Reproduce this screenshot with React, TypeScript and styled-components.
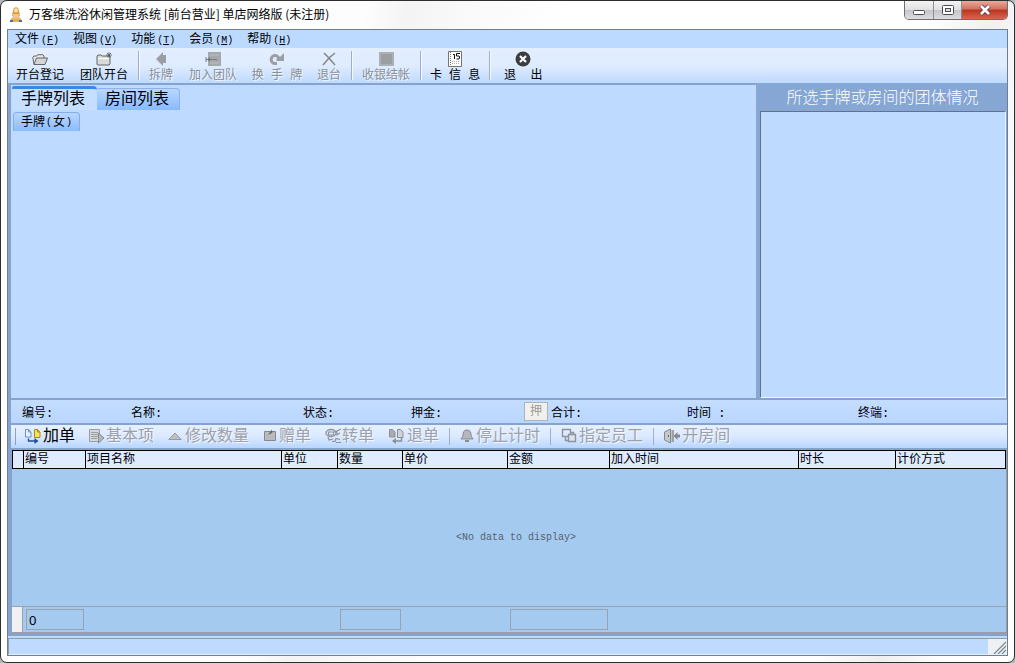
import React from "react";
import styled, { createGlobalStyle, css } from "styled-components";

const song = '"Liberation Mono", "Noto Sans CJK SC", monospace';
const ui = '"Noto Sans CJK SC", "Noto Sans", sans-serif';

const GlobalStyle = createGlobalStyle`
  * { box-sizing: border-box; }
  body { margin: 0; background: #b4b6b8; font: 12px/16px ${song}; color: #000; }
  button { font: inherit; color: inherit; border: 0; padding: 0; margin: 0; background: none; white-space: pre; }
  svg { flex-shrink: 0; }
`;

const Window = styled.div`
  min-height: 100vh;
  display: flex;
  flex-direction: column;
  padding: 0 6px 6px;
  border: 1px solid #2e2e30;
  border-radius: 7px;
  background: linear-gradient(100deg, #fff 0, #fdfdfd 360px, #f4f4f4 400px, #fafafa 470px, #fff 560px, #fff 82%, #f0f0f0 88%, #fff 94%);
`;

const TitleBar = styled.header`
  display: flex;
  align-items: flex-start;
  height: 28px;
  font-family: ${ui};
`;

const Title = styled.h1`
  flex: 1;
  margin: 0;
  padding: 5px 0 0 5px;
  font-size: 12px;
  line-height: 16px;
  font-weight: 400;
  white-space: nowrap;
`;

const AppIcon = styled.svg`
  margin: 5px 0 0 1px;
`;

const CaptionButtons = styled.div`
  display: flex;
  height: 19px;
  border: 1px solid #6d6d72;
  border-top: 0;
  border-radius: 0 0 5px 5px;
  overflow: hidden;
`;

const CaptionButton = styled.button<{ $close?: boolean }>`
  display: flex;
  align-items: center;
  justify-content: center;
  width: ${(p) => (p.$close ? 46 : 28)}px;
  border-left: ${(p) => (p.$close ? "1px solid #7c3a34" : 0)};
  background: ${(p) =>
    p.$close
      ? "linear-gradient(#e9a99c 0, #d4705f 45%, #bd3420 50%, #d6664e 100%)"
      : "linear-gradient(#f4f4f4 0, #e0e0e2 48%, #c6c6ca 52%, #dcdce0 100%)"};
  & + & { border-left: 1px solid #8d8d92; }
`;

const Client = styled.div`
  flex: 1;
  display: flex;
  flex-direction: column;
  border: 1px solid #6e7f90;
  background: #bedaff;
`;

const MenuBar = styled.nav`
  display: flex;
  gap: 14px;
  height: 18px;
  padding-left: 7px;
  background: #bcd9ff;
`;

const MenuButton = styled.button`
  display: flex;
  align-items: center;
  gap: 2px;
  padding-top: 3px;
  line-height: 15px;
`;

const Latin = styled.span`
  font-size: 10px;
`;

const MainToolbar = styled.div`
  display: flex;
  height: 35px;
  background: linear-gradient(#e3eeff 0, #dfecff 50%, #bedaff 100%);
`;

const ToolButton = styled.button<{ $pad?: number }>`
  display: flex;
  flex-direction: column;
  align-items: center;
  padding: 3px ${(p) => p.$pad ?? 8}px 0;
  line-height: 18px;
  &:disabled {
    color: #8b9097;
    text-shadow: 1px 1px 0 #f2f7ff;
  }
`;

const SpacedButton = styled(ToolButton)`
  width: 64px;
  padding-left: 0;
  padding-right: 0;
`;

const ToolSeparator = styled.span`
  width: 1px;
  margin: 3px 2px;
  background: #a3afc0;
  box-shadow: 1px 0 0 #f5f9ff;
`;

const Workspace = styled.div`
  flex: 1;
  display: flex;
  border-left: 3px solid #86a3cf;
`;

const ListPane = styled.section`
  flex: 1;
  border-top: 2px solid #86a3cf;
  background: #bedaff;
`;

const TabRow = styled.div`
  display: flex;
  align-items: flex-end;
  height: 25px;
  padding-left: 1px;
`;

const Tab = styled.button<{ $active?: boolean }>`
  height: ${(p) => (p.$active ? 24 : 22)}px;
  padding: 0 ${(p) => (p.$active ? 12 : 10)}px 0 ${(p) => (p.$active ? 9 : 8)}px;
  font-size: 16px;
  line-height: 20px;
  border-radius: 2px 4px 0 0;
  ${(p) =>
    p.$active
      ? css`
          border-top: 3px solid #3889e6;
          background: #c6deff;
        `
      : css`
          border: 1px solid #8db2e6;
          border-left: 0;
          border-bottom: 0;
          background: linear-gradient(#b9d7ff, #86baff);
        `}
`;

const SubTab = styled.button`
  display: flex;
  align-items: center;
  gap: 1px;
  height: 19px;
  margin: 2px 0 0 2px;
  padding: 2px 7px 0;
  border: 1px solid #86aee4;
  border-bottom: 0;
  border-radius: 4px 4px 0 0;
  background: linear-gradient(#b9d7ff, #8abcff);
`;

const GroupPane = styled.section`
  display: flex;
  flex-direction: column;
  width: 251px;
  padding-left: 4px;
  background: #86a6d4;
`;

const GroupTitle = styled.h2`
  height: 28px;
  margin: 0;
  padding: 2px 2px 0 0;
  font-size: 16px;
  line-height: 28px;
  font-weight: 300;
  text-align: center;
  color: #fff;
`;

const GroupBox = styled.div`
  flex: 1;
  margin-right: 1px;
  border: 1px solid #eef4fc;
  border-top-color: #66727c;
  border-left-color: #66727c;
  background: #bedaff;
`;

const InfoStrip = styled.div`
  display: grid;
  grid-template-columns: 109px 172px 108px 113px 27px 136px 171px 1fr;
  align-items: center;
  height: 27px;
  padding-left: 11px;
  border: solid #86a3cf;
  border-width: 2px 0 2px 3px;
  background: linear-gradient(#c4ddff, #b9d6fe);
`;

const InfoLabel = styled.span`
  padding-top: 4px;
`;

const DepositButton = styled.button`
  width: 24px;
  height: 19px;
  padding-top: 2px;
  border: 1px solid #a9b4bd;
  background: #f1f0ec;
  line-height: 15px;
  &:disabled { color: #9a9a9a; }
`;

const OrderToolbar = styled.div`
  display: flex;
  align-items: stretch;
  height: 23px;
  padding-left: 4px;
  border-left: 3px solid #86a3cf;
  background: linear-gradient(#e6f0ff 0, #dbe9ff 50%, #b8d6ff 100%);
`;

const Grip = styled.span`
  width: 1px;
  margin: 3px 1px 3px 0;
  background: #8f9fb6;
`;

const OrderButton = styled.button`
  display: flex;
  align-items: flex-start;
  gap: 1px;
  padding: 2px 7px 0;
  font-size: 16px;
  line-height: 20px;
  & svg { margin-top: 1px; }
  &:disabled {
    color: #9da2aa;
    text-shadow: 1px 1px 0 #f2f7ff;
  }
`;

const OrderSeparator = styled.span`
  width: 1px;
  margin: 3px;
  background: #a3afc0;
`;

const GridFrame = styled.div`
  padding-left: 1px;
  border: solid #86a3cf;
  border-width: 2px 0 2px 3px;
  background: #86a3cf;
`;

const Grid = styled.table`
  width: 100%;
  table-layout: fixed;
  border-spacing: 0;
  border-right: 1px solid #989da6;
  border-bottom: 2px solid #989da6;
  background: #a5caf0;
`;

const HeadCell = styled.th`
  height: 18px;
  padding: 2px 0 0 1px;
  border: solid #000;
  border-width: 1px 0 1px 1px;
  background: #dfebff;
  font-weight: 400;
  line-height: 15px;
  text-align: left;
  white-space: nowrap;
  &:last-child { border-right-width: 1px; }
`;

const EmptyCell = styled.td`
  height: 137px;
  padding: 0 0 0 14px;
  text-align: center;
  font-size: 10px;
  color: #56616e;
`;

const FootCell = styled.td<{ $marker?: boolean }>`
  height: 26px;
  padding: 2px 1px 2px 3px;
  border-top: 1px solid #98a2b0;
  ${(p) =>
    p.$marker &&
    css`
      background: #f0f0f0;
      border-right: 1px solid #98a2b0;
    `}
`;

const Sum = styled.output`
  display: block;
  height: 21px;
  padding-left: 2px;
  border: 1px solid #98a2b0;
  font: 13px/21px "Noto Sans", sans-serif;
`;

const StatusBar = styled.footer`
  display: flex;
  justify-content: flex-end;
  height: 17px;
  margin-top: 2px;
  border: solid #8b9db3;
  border-width: 1px 0 0 1px;
  border-bottom: 1px solid #e6f0fc;
  background: #bedaff;
`;

const SizeGrip = styled.svg`
  background: #eef1f4;
`;

type IconProps = { w?: number; h?: number; children: React.ReactNode };
const Icon = ({ w = 16, h = 16, children }: IconProps) => (
  <svg width={w} height={h} viewBox={`0 0 ${w} ${h}`} fill="none" aria-hidden="true">
    {children}
  </svg>
);

const Folder = ({ star }: { star?: boolean }) => (
  <Icon>
    {star ? (
      <>
        <path d="M1 13.500V5l1-1h3l1 1h8v8l-1 1H2z" fill="#d9dbd8" stroke="#62666a" />
        <path d="M2 7.500h11" stroke="#fff" />
        <path d="M10 4h6M13 1v6M11 2l4 4M15 2l-4 4" stroke="#55595e" strokeWidth=".8" />
      </>
    ) : (
      <>
        <path d="M2 13.500 .8 6.500l1-1.500h3l1 -1.300h5l1.200 1.300v2" fill="#e8e9e4" stroke="#62666a" />
        <path d="M2 13.500 4.500 7h11l-2.500 6.500z" fill="#d3d6d2" stroke="#62666a" />
      </>
    )}
  </Icon>
);

const grey = "#9b9fa4";

const ArrowLeft = () => (
  <Icon><path d="M3 8 10 1v3h3v8h-3v3z" fill={grey} /></Icon>
);
const JoinTeam = () => (
  <Icon>
    <path d="M3 1h13v14H3z" fill="#a6a9ac" />
    <path d="M5 4h9M5 12h9" stroke="#bcbfc2" />
    <path d="M1 6v5M1 8.500h11" stroke="#74787c" />
    <path d="m5 6-3 2.500L5 11z" fill="#74787c" />
  </Icon>
);
const Rotate = () => (
  <Icon>
    <path d="M8 12.500H6a4 4 0 1 1 4-5" stroke={grey} strokeWidth="3" />
    <path d="M7.500 10V7.500L11 6l4-4v8z" fill={grey} />
  </Icon>
);
const Cross = () => (
  <Icon>
    <path d="m3 2 4 4 7 8M14 2 8 7l-6 7" stroke="#85898e" strokeWidth="1.600" />
  </Icon>
);
const Cash = () => (
  <Icon>
    <path d="M1 1h15v14H1z" fill="#adb0b3" />
    <path d="M3 3h11v10H3z" fill="#9b9ea2" />
  </Icon>
);
const Calendar = () => (
  <Icon>
    <path d="M1.500.5h13v15h-13z" fill="#fff" stroke="#77726c" />
    <path d="M3.500 1v14" stroke="#77726c" strokeDasharray="1 1" />
    <path d="M5 10.500h8M5 12.500h8" stroke="#aaa" strokeDasharray="1 1" />
    <path d="M6 3.500h1.500V8M13 2.500H9.500V5H12l.7 1-.7 2H9.500" stroke="#111" />
  </Icon>
);
const Exit = () => (
  <Icon>
    <circle cx="8" cy="8" r="7.500" fill="#3b3e42" />
    <path d="m5 5 6 6M11 5l-6 6" stroke="#fff" strokeWidth="2.200" />
  </Icon>
);

const AddOrder = () => (
  <Icon w={18}>
    <path d="M1.500 1.500h3l2.500 2.500v5H1.500z" fill="#e8f2ff" stroke="#6e8fc0" />
    <path d="M4.500 1.500V4H7" stroke="#6e8fc0" />
    <path d="M10.500 1.500h3L16 4v5.500h-5.500z" fill="#f9e25c" stroke="#a38a20" />
    <path d="M13.500 1.500V4H16" stroke="#a38a20" />
    <path d="M4.500 10.500v2.500h7" stroke="#1d4c9c" strokeWidth="1.400" />
    <path d="m10.500 10 4 3-4 3z" fill="#1d4c9c" />
  </Icon>
);
const BasicItem = () => (
  <Icon>
    <path d="M.5 1.500h10v12H.5z" fill="#d4d8dd" stroke={grey} />
    <path d="M2 4.500h7M2 6.500h7M2 8.500h7M2 10.500h6" stroke={grey} />
    <path d="m9.500 5 5.500 5-5.500 5z" fill="#b4b8bc" stroke="#888c92" />
  </Icon>
);
const Triangle = () => (
  <Icon><path d="M.8 11.500 7 5l6.200 6.500z" fill="#bdbfc0" stroke="#989ca1" /></Icon>
);
const Gift = () => (
  <Icon w={15}>
    <path d="M1.500 3.500h11v9h-11z" fill="#b8babc" stroke="#85898e" />
    <path d="M5 6.500 8 3V1.500L10 4 7.500 6z" fill="#676b70" />
  </Icon>
);
const Transfer = () => (
  <Icon>
    <ellipse cx="6" cy="5" rx="5" ry="3.500" stroke="#8f9499" strokeWidth="1.400" />
    <path d="M3.500 4h5v3h-5zM9 4l3-1M16 1l-4 2v4l3-2M3 9l1 3 4-1M7 13.500h3l1-3 4 1M11 14.500h5" stroke="#8f9499" strokeWidth="1.200" />
  </Icon>
);
const ReturnOrder = () => (
  <Icon w={18}>
    <path d="M1.500 1.500h3L7 4v5H1.500z" fill="#a9adb2" stroke="#8b8f95" />
    <path d="M9.500 1.500h3L15 4v5.500H9.500z" fill="#d0d3d6" stroke="#8b8f95" />
    <path d="M13.500 10v3H6" stroke="#8b8f95" strokeWidth="1.400" />
    <path d="m8 10-4 3 4 3z" fill="#8b8f95" />
  </Icon>
);
const Bell = () => (
  <Icon w={15}>
    <path d="M7 2c3 0 4 2 4 5 0 2 2 3 2 4H1c0-1 2-2 2-4 0-3 1-5 4-5z" fill="#b4b7bb" stroke="#888c91" />
    <path d="M5 13h4" stroke="#888c91" strokeWidth="2" />
  </Icon>
);
const Assign = () => (
  <Icon w={17}>
    <path d="M1.500 1.500h8v7h-8z" stroke="#8f9398" strokeWidth="1.400" />
    <path d="M7.500 6.500h7v7h-7z" fill="#d8e2f0" stroke="#8f9398" strokeWidth="1.400" />
    <path d="M4.500 9v3.500H7M9.500 4.500h3v2" stroke="#8f9398" strokeWidth="1.400" />
  </Icon>
);
const OpenRoom = () => (
  <Icon w={17}>
    <path d="M.5 4 6.500 1v14l-6-3z" fill="#c5c8cb" stroke="#85898e" />
    <path d="M4.500 7v2" stroke="#666" />
    <path d="M7.500 2H10v12H7.500z" fill="#9da1a5" />
    <path d="m9.500 8 4-4v2.500H16v3h-2.500V12z" fill="#85898e" />
  </Icon>
);

const menus = [["文件", "F"], ["视图", "V"], ["功能", "T"], ["会员", "M"], ["帮助", "H"]];

const orderTools = [
  { label: "加单", icon: <AddOrder />, enabled: true },
  { label: "基本项", icon: <BasicItem /> },
  { label: "修改数量", icon: <Triangle /> },
  { label: "赠单", icon: <Gift /> },
  { label: "转单", icon: <Transfer /> },
  { label: "退单", icon: <ReturnOrder /> },
  { label: "停止计时", icon: <Bell />, divided: true },
  { label: "指定员工", icon: <Assign />, divided: true },
  { label: "开房间", icon: <OpenRoom />, divided: true },
];

const columns = [
  { label: "", width: 11 },
  { label: "编号", width: 62, sum: "0" },
  { label: "项目名称", width: 196 },
  { label: "单位", width: 56 },
  { label: "数量", width: 65, sum: "" },
  { label: "单价", width: 105 },
  { label: "金额", width: 102, sum: "" },
  { label: "加入时间", width: 189 },
  { label: "时长", width: 97 },
  { label: "计价方式" },
];

export default function App() {
  return (
    <>
      <GlobalStyle />
      <Window>
        <TitleBar>
          <AppIcon width="16" height="18" viewBox="0 0 16 18" aria-hidden="true">
            <path d="M5 5c0-5 6-5 6 0l1 5H4z" fill="#d9952e" />
            <circle cx="8" cy="4.500" r="2.200" fill="#f9d9b0" />
            <path d="M5 8h6l1 6H4z" fill="#f2c48c" />
            <path d="M3 13c2-2 3 0 5 0s3-2 5 0l1 3H2z" fill="#e8b04a" />
            <path d="M2 14h3v2H2zM11 14h3v2h-3z" fill="#3f6fc4" />
          </AppIcon>
          <Title>万客维洗浴休闲管理系统 [前台营业] 单店网络版 (未注册)</Title>
          <CaptionButtons>
            <CaptionButton aria-label="最小化">
              <Icon w={14} h={12}><rect x="1.500" y="6.500" width="11" height="4" rx="1" fill="#fff" stroke="#4c4c58" /></Icon>
            </CaptionButton>
            <CaptionButton aria-label="最大化">
              <Icon w={14} h={12}>
                <rect x="1.500" y="1.500" width="11" height="9" rx="1" fill="#fff" stroke="#4c4c58" />
                <rect x="4.500" y="4.500" width="5" height="3" fill="#ddd" stroke="#4c4c58" />
              </Icon>
            </CaptionButton>
            <CaptionButton $close aria-label="关闭">
              <Icon w={14} h={12}>
                <path d="m3 2 8 8M11 2l-8 8" stroke="#5b3a44" strokeWidth="4.500" />
                <path d="m3 2 8 8M11 2l-8 8" stroke="#fff" strokeWidth="2.600" />
              </Icon>
            </CaptionButton>
          </CaptionButtons>
        </TitleBar>
        <Client>
          <MenuBar>
            {menus.map(([name, key]) => (
              <MenuButton key={key}>
                {name}<Latin>(<u>{key}</u>)</Latin>
              </MenuButton>
            ))}
          </MenuBar>
          <MainToolbar>
            <ToolButton><Folder />开台登记</ToolButton>
            <ToolButton><Folder star />团队开台</ToolButton>
            <ToolSeparator />
            <ToolButton disabled><ArrowLeft />拆牌</ToolButton>
            <ToolButton disabled><JoinTeam />加入团队</ToolButton>
            <SpacedButton disabled><Rotate />换 手 牌</SpacedButton>
            <ToolButton disabled><Cross />退台</ToolButton>
            <ToolSeparator />
            <ToolButton disabled><Cash />收银结帐</ToolButton>
            <ToolSeparator />
            <SpacedButton><Calendar />卡 信 息</SpacedButton>
            <ToolSeparator />
            <ToolButton $pad={12}><Exit />{"退  出"}</ToolButton>
          </MainToolbar>
          <Workspace>
            <ListPane>
              <TabRow role="tablist">
                <Tab $active role="tab" aria-selected="true">手牌列表</Tab>
                <Tab role="tab" aria-selected="false">房间列表</Tab>
              </TabRow>
              <SubTab role="tab" aria-selected="true">手牌<Latin>(</Latin>女<Latin>)</Latin></SubTab>
            </ListPane>
            <GroupPane>
              <GroupTitle>所选手牌或房间的团体情况</GroupTitle>
              <GroupBox />
            </GroupPane>
          </Workspace>
          <InfoStrip>
            <InfoLabel>编号:</InfoLabel>
            <InfoLabel>名称:</InfoLabel>
            <InfoLabel>状态:</InfoLabel>
            <InfoLabel>押金:</InfoLabel>
            <DepositButton disabled>押</DepositButton>
            <InfoLabel>合计:</InfoLabel>
            <InfoLabel>时间 :</InfoLabel>
            <InfoLabel>终端:</InfoLabel>
          </InfoStrip>
          <OrderToolbar>
            <Grip />
            {orderTools.map((t) => (
              <React.Fragment key={t.label}>
                {t.divided && <OrderSeparator />}
                <OrderButton disabled={!t.enabled}>{t.icon}{t.label}</OrderButton>
              </React.Fragment>
            ))}
          </OrderToolbar>
          <GridFrame>
            <Grid>
              <colgroup>
                {columns.map((c, i) => <col key={i} width={c.width} />)}
              </colgroup>
              <thead>
                <tr>{columns.map((c, i) => <HeadCell key={i}>{c.label}</HeadCell>)}</tr>
              </thead>
              <tbody>
                <tr><EmptyCell colSpan={columns.length}>&lt;No data to display&gt;</EmptyCell></tr>
              </tbody>
              <tfoot>
                <tr>
                  {columns.map((c, i) => (
                    <FootCell key={i} $marker={i === 0}>
                      {c.sum !== undefined && <Sum>{c.sum}</Sum>}
                    </FootCell>
                  ))}
                </tr>
              </tfoot>
            </Grid>
          </GridFrame>
          <StatusBar>
            <SizeGrip width="19" height="15" viewBox="0 0 19 15" aria-hidden="true">
              <path d="M6 15 18 3M10 15l8-8M14 15l4-4" stroke="#7f8a96" strokeWidth="1.300" />
            </SizeGrip>
          </StatusBar>
        </Client>
      </Window>
    </>
  );
}
